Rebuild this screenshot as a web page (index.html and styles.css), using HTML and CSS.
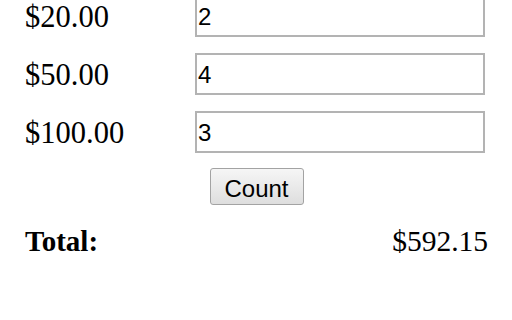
FILE: index.html
```html
<!DOCTYPE html>
<html>
<head>
<meta charset="utf-8">
<link rel="stylesheet" href="styles.css">
</head>
<body>
<form class="counter">
  <div class="rows">
    <span class="label">$20.00</span><input class="qty" type="text" value="2">
    <span class="label">$50.00</span><input class="qty" type="text" value="4">
    <span class="label">$100.00</span><input class="qty" type="text" value="3">
  </div>
  <div class="actions"><button type="button" class="count-btn">Count</button></div>
  <div class="total-row"><span class="total-label">Total:</span><span class="total-value">$592.15</span></div>
</form>
</body>
</html>
```
FILE: styles.css
```css
html, body {
  margin: 0;
  padding: 0;
  background: #ffffff;
  overflow: hidden;
}
body {
  width: 512px;
  height: 320px;
}
.counter {
  margin: -5px 0 0 25px;
  width: 463px;
  font-family: "Liberation Serif", "Times New Roman", serif;
  font-size: 30.5px;
  color: #000;
}
.rows {
  display: grid;
  grid-template-columns: 170px 290px;
  grid-auto-rows: 42px;
  row-gap: 16px;
  align-items: center;
}
.label {
  line-height: 34px;
  padding-top: 1px;
}
.qty {
  box-sizing: border-box;
  width: 290px;
  height: 42px;
  margin: 0;
  border: 2px solid #b3b3b3;
  padding: 2px 0 0 1px;
  font-family: "Liberation Sans", Arial, sans-serif;
  font-size: 24px;
  color: #000;
  background: #fff;
  outline: none;
}
.actions {
  display: flex;
  justify-content: center;
  margin-top: 15px;
}
.count-btn {
  box-sizing: border-box;
  width: 94px;
  height: 37px;
  margin: 0;
  padding: 4px 0 0 0;
  border: 1px solid #a3a3a3;
  border-radius: 3px;
  background: linear-gradient(#f6f6f6, #dedede);
  font-family: "Liberation Sans", Arial, sans-serif;
  font-size: 24px;
  color: #000;
}
.total-row {
  display: flex;
  justify-content: space-between;
  margin-top: 19px;
  line-height: 34px;
}
.total-label {
  font-weight: bold;
  font-size: 29px;
}
.total-value {
  font-size: 29.5px;
}
```
